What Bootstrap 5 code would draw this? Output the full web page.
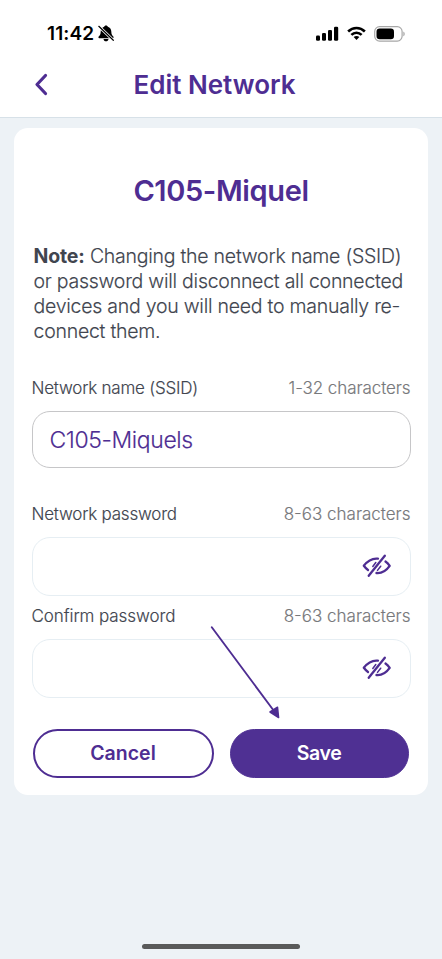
<!DOCTYPE html>
<html lang="en">
<head>
<meta charset="utf-8">
<meta name="viewport" content="width=device-width, initial-scale=1">
<title>Edit Network</title>
<link rel="stylesheet" href="https://cdn.jsdelivr.net/npm/bootstrap@5.3.0/dist/css/bootstrap.min.css">
<style>
:root{--brand:#4e2d92;--ink:#41454f;--page:#edf2f6}
body{font-family:Inter,"Open Sans",sans-serif;background:var(--page);color:var(--ink);height:959px;overflow:hidden}
svg{display:block;flex:none}
.top-area{height:118px;border-bottom:1px solid #d7e1e8}
.status-row{height:67px;padding:0 36px 0 47px;color:#000}
.clock{font-size:19px;font-weight:600;letter-spacing:.1px;line-height:24px}
.bell{margin-left:4px}
.title-row{height:35px}
.back-btn{margin-left:34px;width:15px}
.page-title{font-size:26px;font-weight:600;color:var(--brand);line-height:34px;margin-right:62px}
.panel{margin:10px 14px 0;height:667px;border-radius:14px;padding:46px 17.5px 0}
.net-title{font-size:29px;font-weight:600;line-height:34px;letter-spacing:-.38px;color:var(--brand)}
.note,.lbl,.field-name{-webkit-text-stroke:.15px currentColor}
.note{font-size:19.5px;line-height:25.3px;font-weight:300;margin:35.500px 0 0 2px;letter-spacing:-.25px}
.note b{font-weight:700;letter-spacing:-.15px;-webkit-text-stroke:0}
.lbl{font-size:17px;font-weight:300;line-height:22px;letter-spacing:-.22px}
.hint{color:#77787b;letter-spacing:-.08px}
.hint-wide{letter-spacing:0}
.confirm-lbl{letter-spacing:-.08px}
.field,.field:focus{border-radius:18px;border:1px solid #e6eef3;height:59px;background:#fff;box-shadow:none;padding:0 18px}
.field-name{border:1.5px solid #c6c6c8;height:57px;color:var(--brand);font-size:23px;font-weight:300;letter-spacing:-.4px}
.field-name.field{border-color:#c6c6c8;padding-left:17px}
.gap-title{margin-top:32.5px}
.gap-lbl{margin-top:12px}
.gap-group{margin-top:34.500px}
.gap-confirm{margin-top:9px}
.act{height:49px;border-radius:25px;font-size:19.5px;font-weight:600;padding:0;--bs-btn-color:var(--brand);--bs-btn-border-color:var(--brand)}
.act-cancel{width:181px;border-width:2px}
.act-save{width:179px;background:#4f3093;--bs-btn-color:#fff;--bs-btn-border-color:#4f3093;letter-spacing:-.4px}
.actions{margin:31px 2px 0 1px}
.pointer{position:absolute;left:205px;top:620px}
.home-bar{width:158px;height:5px;border-radius:3px;background:#595a5a;margin:149px auto 0 142px}
</style>
</head>
<body>
<header class="top-area bg-white">
  <div class="status-row d-flex align-items-center">
    <span class="clock">11:42</span>
    <svg class="bell" width="16" height="17" viewBox="0 0 16 17"><path d="M8 .4c-1 0-1.700.6-1.800 1.300C4 2.300 2.700 4.200 2.700 6.500c0 3.200-1 4.100-2 5.100-.6.7-.3 1.700.6 1.700h13.400c.9 0 1.200-1 .6-1.700-1-1-2-1.900-2-5.100 0-2.300-1.300-4.200-3.500-4.800C9.700 1 9 .4 8 .4zM5.500 14h5c-.2 1.500-1.200 2.300-2.500 2.300S5.700 15.500 5.500 14z"/><path d="M.8 1.300l14.500 14" stroke="#fff" stroke-width="2.800"/><path d="M.8 1.300l14.500 14" stroke="#000" stroke-width="1.200" stroke-linecap="round"/></svg>
    <svg class="ms-auto" width="23" height="15" viewBox="0 0 23 15"><rect x="0" y="9.500" width="4" height="5.200" rx="1.300"/><rect x="6" y="7" width="4" height="7.700" rx="1.300"/><rect x="12" y="4" width="4" height="10.700" rx="1.300"/><rect x="18" y=".7" width="4.200" height="14" rx="1.300"/></svg>
    <svg class="ms-2" width="19" height="15" viewBox="0 0 20 15"><g fill="none" stroke="#000" stroke-width="2.700"><path d="M1.200 5.400c5-4.900 12.600-4.900 17.600 0"/><path d="M4.600 8.900c3.100-3 7.700-3 10.800 0"/></g><path d="M7 11.300c1.700-1.500 4.300-1.500 6 0l-3 3.100z"/></svg>
    <svg class="ms-2" width="32" height="16" viewBox="0 0 32 16"><rect x=".7" y=".7" width="27.400" height="14.400" rx="4.800" fill="#fff" stroke="#a7a7a7" stroke-width="1.200"/><rect x="2.500" y="2.500" width="17.500" height="10.800" rx="3.200"/><path d="M29.400 5.500v4.800c1.700-.7 1.700-4.100 0-4.800z" fill="#a0a0a0"/></svg>
  </div>
  <div class="title-row d-flex align-items-center">
    <a href="#" class="back-btn" aria-label="Back"><svg width="15" height="24" viewBox="0 0 15 24"><path d="M11.500 2.500L3 11.500l8.500 9" fill="none" stroke="#4e2d92" stroke-width="3.200" stroke-linecap="round" stroke-linejoin="round"/></svg></a>
    <div class="flex-fill text-center"><span class="page-title">Edit Network</span></div>
  </div>
</header>
<main class="panel bg-white">
  <h1 class="net-title text-center mb-0">C105-Miquel</h1>
  <p class="note text-nowrap"><b>Note:</b> Changing the network name (SSID)<br>or password will disconnect all connected<br>devices and you will need to manually re-<br>connect them.</p>
  <div class="lbl d-flex justify-content-between gap-title"><label for="ssid">Network name (SSID)</label><span class="hint">1-32 characters</span></div>
  <input id="ssid" class="form-control field field-name gap-lbl" value="C105-Miquels">
  <div class="lbl d-flex justify-content-between gap-group"><span>Network password</span><span class="hint hint-wide">8-63 characters</span></div>
  <div class="field d-flex align-items-center justify-content-end gap-lbl">
    <svg width="30" height="24" viewBox="0 0 30 24"><g fill="none" stroke="#4e2d92" stroke-width="2.300" stroke-linecap="round" stroke-linejoin="round"><path d="M22.800 1.700L6.700 21.800"/><path d="M16 4.700C10.500 4 5.500 7 1.800 11.800c1.300 1.700 2.600 3.100 4.200 4.200"/><path d="M23.500 7.500c1.700 1.100 3 2.500 4.200 4.300-3.500 4.900-8 7.700-13.200 7.200"/><path d="M10.800 12.500l3-4M18.700 12.200l-3.200 4.200" stroke-width="1.500"/></g></svg>
  </div>
  <div class="lbl d-flex justify-content-between gap-confirm"><span class="confirm-lbl">Confirm password</span><span class="hint hint-wide">8-63 characters</span></div>
  <div class="field d-flex align-items-center justify-content-end gap-lbl">
    <svg width="30" height="24" viewBox="0 0 30 24"><g fill="none" stroke="#4e2d92" stroke-width="2.300" stroke-linecap="round" stroke-linejoin="round"><path d="M22.800 1.700L6.700 21.800"/><path d="M16 4.700C10.500 4 5.500 7 1.800 11.800c1.300 1.700 2.600 3.100 4.200 4.200"/><path d="M23.500 7.500c1.700 1.100 3 2.500 4.200 4.300-3.500 4.900-8 7.700-13.200 7.200"/><path d="M10.800 12.500l3-4M18.700 12.200l-3.200 4.200" stroke-width="1.500"/></g></svg>
  </div>
  <div class="actions d-flex justify-content-between">
    <button type="button" class="btn act act-cancel">Cancel</button>
    <button type="button" class="btn act act-save">Save</button>
  </div>
</main>
<div class="home-bar"></div>
<svg class="pointer" width="80" height="102" viewBox="0 0 80 102"><path d="M6.800 7.300L69 91" stroke="#4e2d92" stroke-width="1.900" stroke-linecap="round"/><path d="M73.600 97.500l-8.600-5.500 7.500-4.800z" fill="#4e2d92" stroke="#4e2d92" stroke-width="1.500" stroke-linejoin="round"/></svg>
<script src="https://cdn.jsdelivr.net/npm/bootstrap@5.3.0/dist/js/bootstrap.bundle.min.js"></script>
</body>
</html>
